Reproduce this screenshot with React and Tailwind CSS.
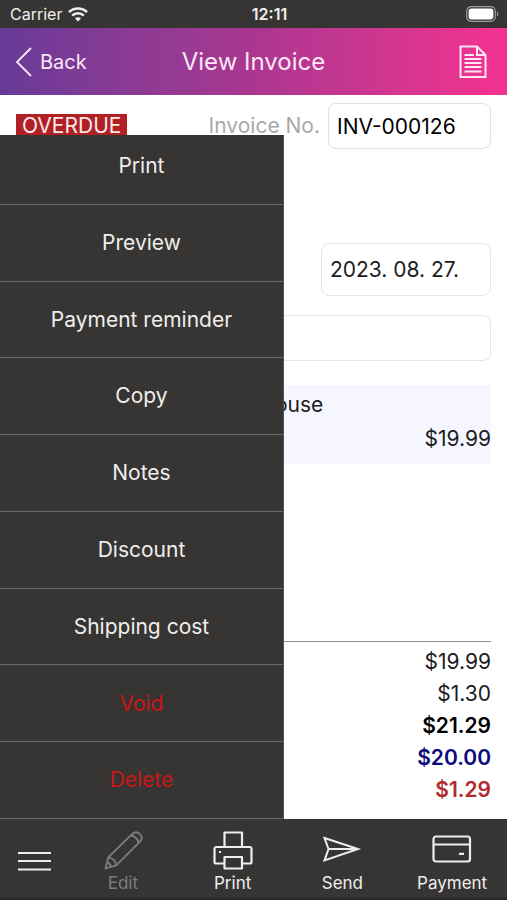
import { useState } from "react";

const menuItems = [
  { label: "Print" },
  { label: "Preview" },
  { label: "Payment reminder" },
  { label: "Copy" },
  { label: "Notes" },
  { label: "Discount" },
  { label: "Shipping cost" },
  { label: "Void", danger: true },
  { label: "Delete", danger: true },
];

const totals = [
  { amount: "$19.99", style: "text-[#1c1c1e]" },
  { amount: "$1.30", style: "text-[#1c1c1e]" },
  { amount: "$21.29", style: "font-semibold text-black" },
  { amount: "$20.00", style: "font-semibold text-[#0b0b7c]" },
  { amount: "$1.29", style: "font-semibold text-[#b12a2e]" },
];

function StatusBar() {
  return (
    <div className="grid h-7 grid-cols-3 items-center bg-[#373533] px-2 text-[#f0efee]">
      <div className="flex items-center gap-1.5 pl-0.5 text-base">
        Carrier
        <svg width="20" height="15" viewBox="0 0 20 15" fill="none" stroke="currentColor" strokeWidth="2.6">
          <path d="M1 5.2a12.8 12.8 0 0 1 18 0" />
          <path d="M4.2 8.6a8.2 8.2 0 0 1 11.6 0" />
          <path d="M10 14.6l-3-3a4.2 4.2 0 0 1 6 0z" fill="currentColor" stroke="none" />
        </svg>
      </div>
      <div className="pl-8 text-center text-base font-semibold">12:11</div>
      <svg className="justify-self-end" width="33" height="16" viewBox="0 0 33 16">
        <rect x="0.7" y="0.7" width="28.6" height="14.6" rx="4.5" fill="none" stroke="#a09f9e" strokeWidth="1.2" />
        <rect x="2.6" y="2.6" width="24.8" height="10.8" rx="2.8" fill="#fff" />
        <path d="M31 5.5c1.6.6 1.6 4.4 0 5z" fill="#a09f9e" />
      </svg>
    </div>
  );
}

function Header() {
  return (
    <header className="grid h-[67px] grid-cols-[1fr_auto_1fr] items-center bg-linear-to-r from-[#673a97] via-[#ab3690] to-[#f4318f] px-4 text-[#fbe6f6]">
      <button type="button" className="flex items-center gap-2 justify-self-start text-xl">
        <svg width="16" height="30" viewBox="0 0 16 30" fill="none" stroke="currentColor" strokeWidth="1.8">
          <path d="M15 1L1 15l14 14" />
        </svg>
        Back
      </button>
      <h1 className="text-2xl">View Invoice</h1>
      <button type="button" aria-label="Document" className="justify-self-end pr-1">
        <svg width="28" height="34" viewBox="0 0 28 34" fill="none" stroke="currentColor" strokeWidth="2">
          <path d="M1.5 1.5h16.5l8.5 8.5v22h-25z" />
          <path d="M18 1.5v8.500h8.500" />
          <path d="M5.500 10h9.500M5.500 14h17M5.500 18h17M5.500 22h17M5.500 26.500h17" strokeWidth="1.8" />
        </svg>
      </button>
    </header>
  );
}

function Invoice() {
  const [number, setNumber] = useState("INV-000126");
  const [date, setDate] = useState("2023. 08. 27.");
  const [client, setClient] = useState("");

  return (
    <div className="flex flex-col px-4 pt-2 pb-3 text-[21px] text-[#1c1c1e]">
      <div className="flex items-center">
        <span className="bg-[#b02024] px-1.5 leading-6 text-[#fbe9e9]">OVERDUE</span>
        <label htmlFor="number" className="ml-auto pr-2 text-[#a9a9a9]">
          Invoice No.
        </label>
        <input
          id="number"
          value={number}
          onChange={(e) => setNumber(e.target.value)}
          className="h-[46px] w-[163px] rounded-lg border border-[#e2e2e2] bg-white px-2 text-black"
        />
      </div>
      <input
        aria-label="Date"
        value={date}
        onChange={(e) => setDate(e.target.value)}
        className="mt-[94px] h-[53px] w-[170px] self-end rounded-lg border border-[#e6e6e6] bg-white px-2"
      />
      <input
        aria-label="Client"
        value={client}
        onChange={(e) => setClient(e.target.value)}
        className="mt-[19px] h-[46px] w-full rounded-lg border border-[#e6e6e6] bg-white px-2"
      />
      <div className="mt-6 flex h-[79px] flex-col bg-[#f5f6ff] pt-1">
        <span className="pl-60 leading-8">Mouse</span>
        <span className="text-right leading-9">$19.99</span>
      </div>
      <ul className="mt-[177px] border-t border-[#8f8f8f] pt-1 text-right">
        {totals.map((t) => (
          <li key={t.amount} className={`leading-8 ${t.style}`}>
            {t.amount}
          </li>
        ))}
      </ul>
    </div>
  );
}

function ActionMenu() {
  return (
    <nav className="absolute bottom-0 left-0 flex h-[684px] w-[56%] flex-col justify-end overflow-hidden border-r border-[#555352] bg-[#373533]">
      <div className="flex h-[691px] shrink-0 flex-col">
        {menuItems.map((item) => (
          <button
            key={item.label}
            type="button"
            className={`flex-1 border-b border-[#6b6968] text-[21px] ${item.danger ? "text-[#c91519]" : "text-[#efeeed]"}`}
          >
            {item.label}
          </button>
        ))}
      </div>
    </nav>
  );
}

function PencilIcon() {
  return (
    <svg width="40" height="40" viewBox="0 0 40 40" fill="none" stroke="currentColor" strokeWidth="1.8" strokeLinejoin="round">
      <path d="M2.5 37.5L5.3 26.3 29 3.2C31.500.8 34.600.8 36.900 3.100C39.200 5.400 39.200 8.300 36.900 10.700L13.200 34.300z" />
      <path d="M5.300 26.300C9.500 26.800 12.700 30 13.200 34.300M28 4.500C32 5.200 34.800 8 35.600 12M4.200 31.500C6.300 32 7.600 33.500 8.100 36" />
    </svg>
  );
}

function PrinterIcon() {
  return (
    <svg width="40" height="40" viewBox="0 0 40 40" fill="none" stroke="currentColor" strokeWidth="2.2" strokeLinejoin="round">
      <path d="M11.500 15.500V1.500h17.500v14" />
      <path d="M11 32.500H3A1.500 1.500 0 0 1 1.500 31V18a2 2 0 0 1 2-2h33a2 2 0 0 1 2 2V31a1.500 1.500 0 0 1-1.500 1.500H29" />
      <path d="M11.500 26h17.500V37.500H11.500z" />
      <path d="M6 21h2" />
    </svg>
  );
}

function SendIcon() {
  return (
    <svg width="40" height="40" viewBox="0 0 40 40" fill="none" stroke="currentColor" strokeWidth="2" strokeLinejoin="miter">
      <path d="M2.500 7L36 18 2.500 29.500 6.500 18z" />
      <path d="M6.500 18h29" />
    </svg>
  );
}

function CardIcon() {
  return (
    <svg width="40" height="40" viewBox="0 0 40 40" fill="none" stroke="currentColor" strokeWidth="2.2">
      <rect x="1.500" y="5.500" width="36.500" height="25" rx="2.500" />
      <path d="M1.500 13.500h36.500M27 22.800h5" />
    </svg>
  );
}

const tabs = [
  { label: "Edit", icon: PencilIcon, disabled: true },
  { label: "Print", icon: PrinterIcon },
  { label: "Send", icon: SendIcon },
  { label: "Payment", icon: CardIcon },
];

function Toolbar({ onToggle }) {
  return (
    <footer className="flex h-[81px] border-b-2 border-[#2f2629] bg-[#373533] text-[#efeeed]">
      <button type="button" aria-label="Menu" onClick={onToggle} className="flex w-[68px] items-center justify-center pt-1">
        <svg width="33" height="20" viewBox="0 0 33 20" stroke="currentColor" strokeWidth="2.2">
          <path d="M0 2h33M0 10h33M0 18.500h33" />
        </svg>
      </button>
      {tabs.map(({ label, icon: Icon, disabled }) => (
        <button
          key={label}
          type="button"
          disabled={disabled}
          className={`flex flex-1 flex-col items-center pt-3 text-[17px] leading-6 ${disabled ? "text-[#7f7d7c]" : ""}`}
        >
          <Icon />
          {label}
        </button>
      ))}
    </footer>
  );
}

export default function App() {
  const [menuOpen, setMenuOpen] = useState(true);

  return (
    <div className="flex min-h-screen flex-col bg-white font-['Inter',sans-serif]">
      <StatusBar />
      <Header />
      <main className="relative flex-1">
        <Invoice />
        {menuOpen && <ActionMenu />}
      </main>
      <Toolbar onToggle={() => setMenuOpen(!menuOpen)} />
    </div>
  );
}
